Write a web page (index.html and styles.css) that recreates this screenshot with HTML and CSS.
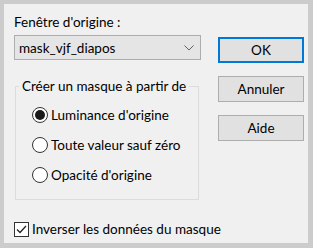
FILE: index.html
```html
<!DOCTYPE html>
<html lang="fr">
<head>
  <meta charset="UTF-8">
  <title>Créer un masque</title>
  <link rel="stylesheet" href="styles.css">
</head>
<body>
  <div class="dialog">
    <div class="left">
      <div class="label">Fenêtre d'origine :</div>
      <div class="select">
        <span>mask_vjf_diapos</span>
        <svg class="chev" width="10" height="6" viewBox="0 0 10 6"><path d="M0.5 0.5 L5 5 L9.5 0.5" fill="none" stroke="#606060" stroke-width="1"/></svg>
      </div>
      <fieldset class="group">
        <legend>Créer un masque à partir de</legend>
        <div class="opts">
          <label class="radio"><span class="dot on"></span>Luminance d'origine</label>
          <label class="radio"><span class="dot"></span>Toute valeur sauf zéro</label>
          <label class="radio"><span class="dot"></span>Opacité d'origine</label>
        </div>
      </fieldset>
      <label class="check">
        <span class="box"><svg width="13" height="13" viewBox="0 0 13 13"><path d="M2 6.5 L5 9.5 L11 3" fill="none" stroke="#222" stroke-width="1.3"/></svg></span>Inverser les données du masque
      </label>
    </div>
    <div class="right">
      <button class="btn ok">OK</button>
      <button class="btn">Annuler</button>
      <button class="btn">Aide</button>
    </div>
  </div>
</body>
</html>
```
FILE: styles.css
```css
* { margin:0; padding:0; box-sizing:border-box; }
body { background:#cccccc; padding:4px 5px 5px 4px; width:313px; height:248px; font-family:Lato, "Liberation Sans", sans-serif; font-size:13.5px; color:#000; white-space:nowrap; }
.dialog { background:#f0f0f0; width:304px; height:239px; display:flex; padding:0 0 0 10px; }
/* left column */
.left { width:187px; display:flex; flex-direction:column; }
.label { height:31px; line-height:17px; padding-top:10px; }
.select { height:25px; border:1px solid #adadad; background:#e5e5e5; display:flex; align-items:center; justify-content:space-between; padding:0 6px 0 4px; }
.chev { display:block; }
.group { margin:18px 2px 0 1px; height:122px; min-width:0; border:1px solid #dcdcdc; padding:6px 0 0 0; }
.group legend { padding:0 3px; margin-left:3px; line-height:16px; }
.opts { padding-left:16px; }
.radio { display:flex; align-items:center; height:30px; gap:3px; }
.dot { width:16px; height:16px; border:1px solid #333; border-radius:50%; background:#fff; display:inline-flex; align-items:center; justify-content:center; }
.dot.on::after { content:""; width:10px; height:10px; border-radius:50%; background:#1a1a1a; }
.check { display:flex; align-items:center; gap:3px; margin-top:21px; }
.box { width:15px; height:15px; border:1px solid #333; background:#fff; display:inline-flex; align-items:center; justify-content:center; }
.box svg { display:block; }
/* buttons */
.right { width:86px; margin-left:17px; padding-top:33px; display:flex; flex-direction:column; gap:13px; }
.btn { height:26px; border:1px solid #adadad; background:#e1e1e1; font-family:inherit; font-size:13.5px; color:#000; }
.btn.ok { border:2px solid #0078d7; }
```
